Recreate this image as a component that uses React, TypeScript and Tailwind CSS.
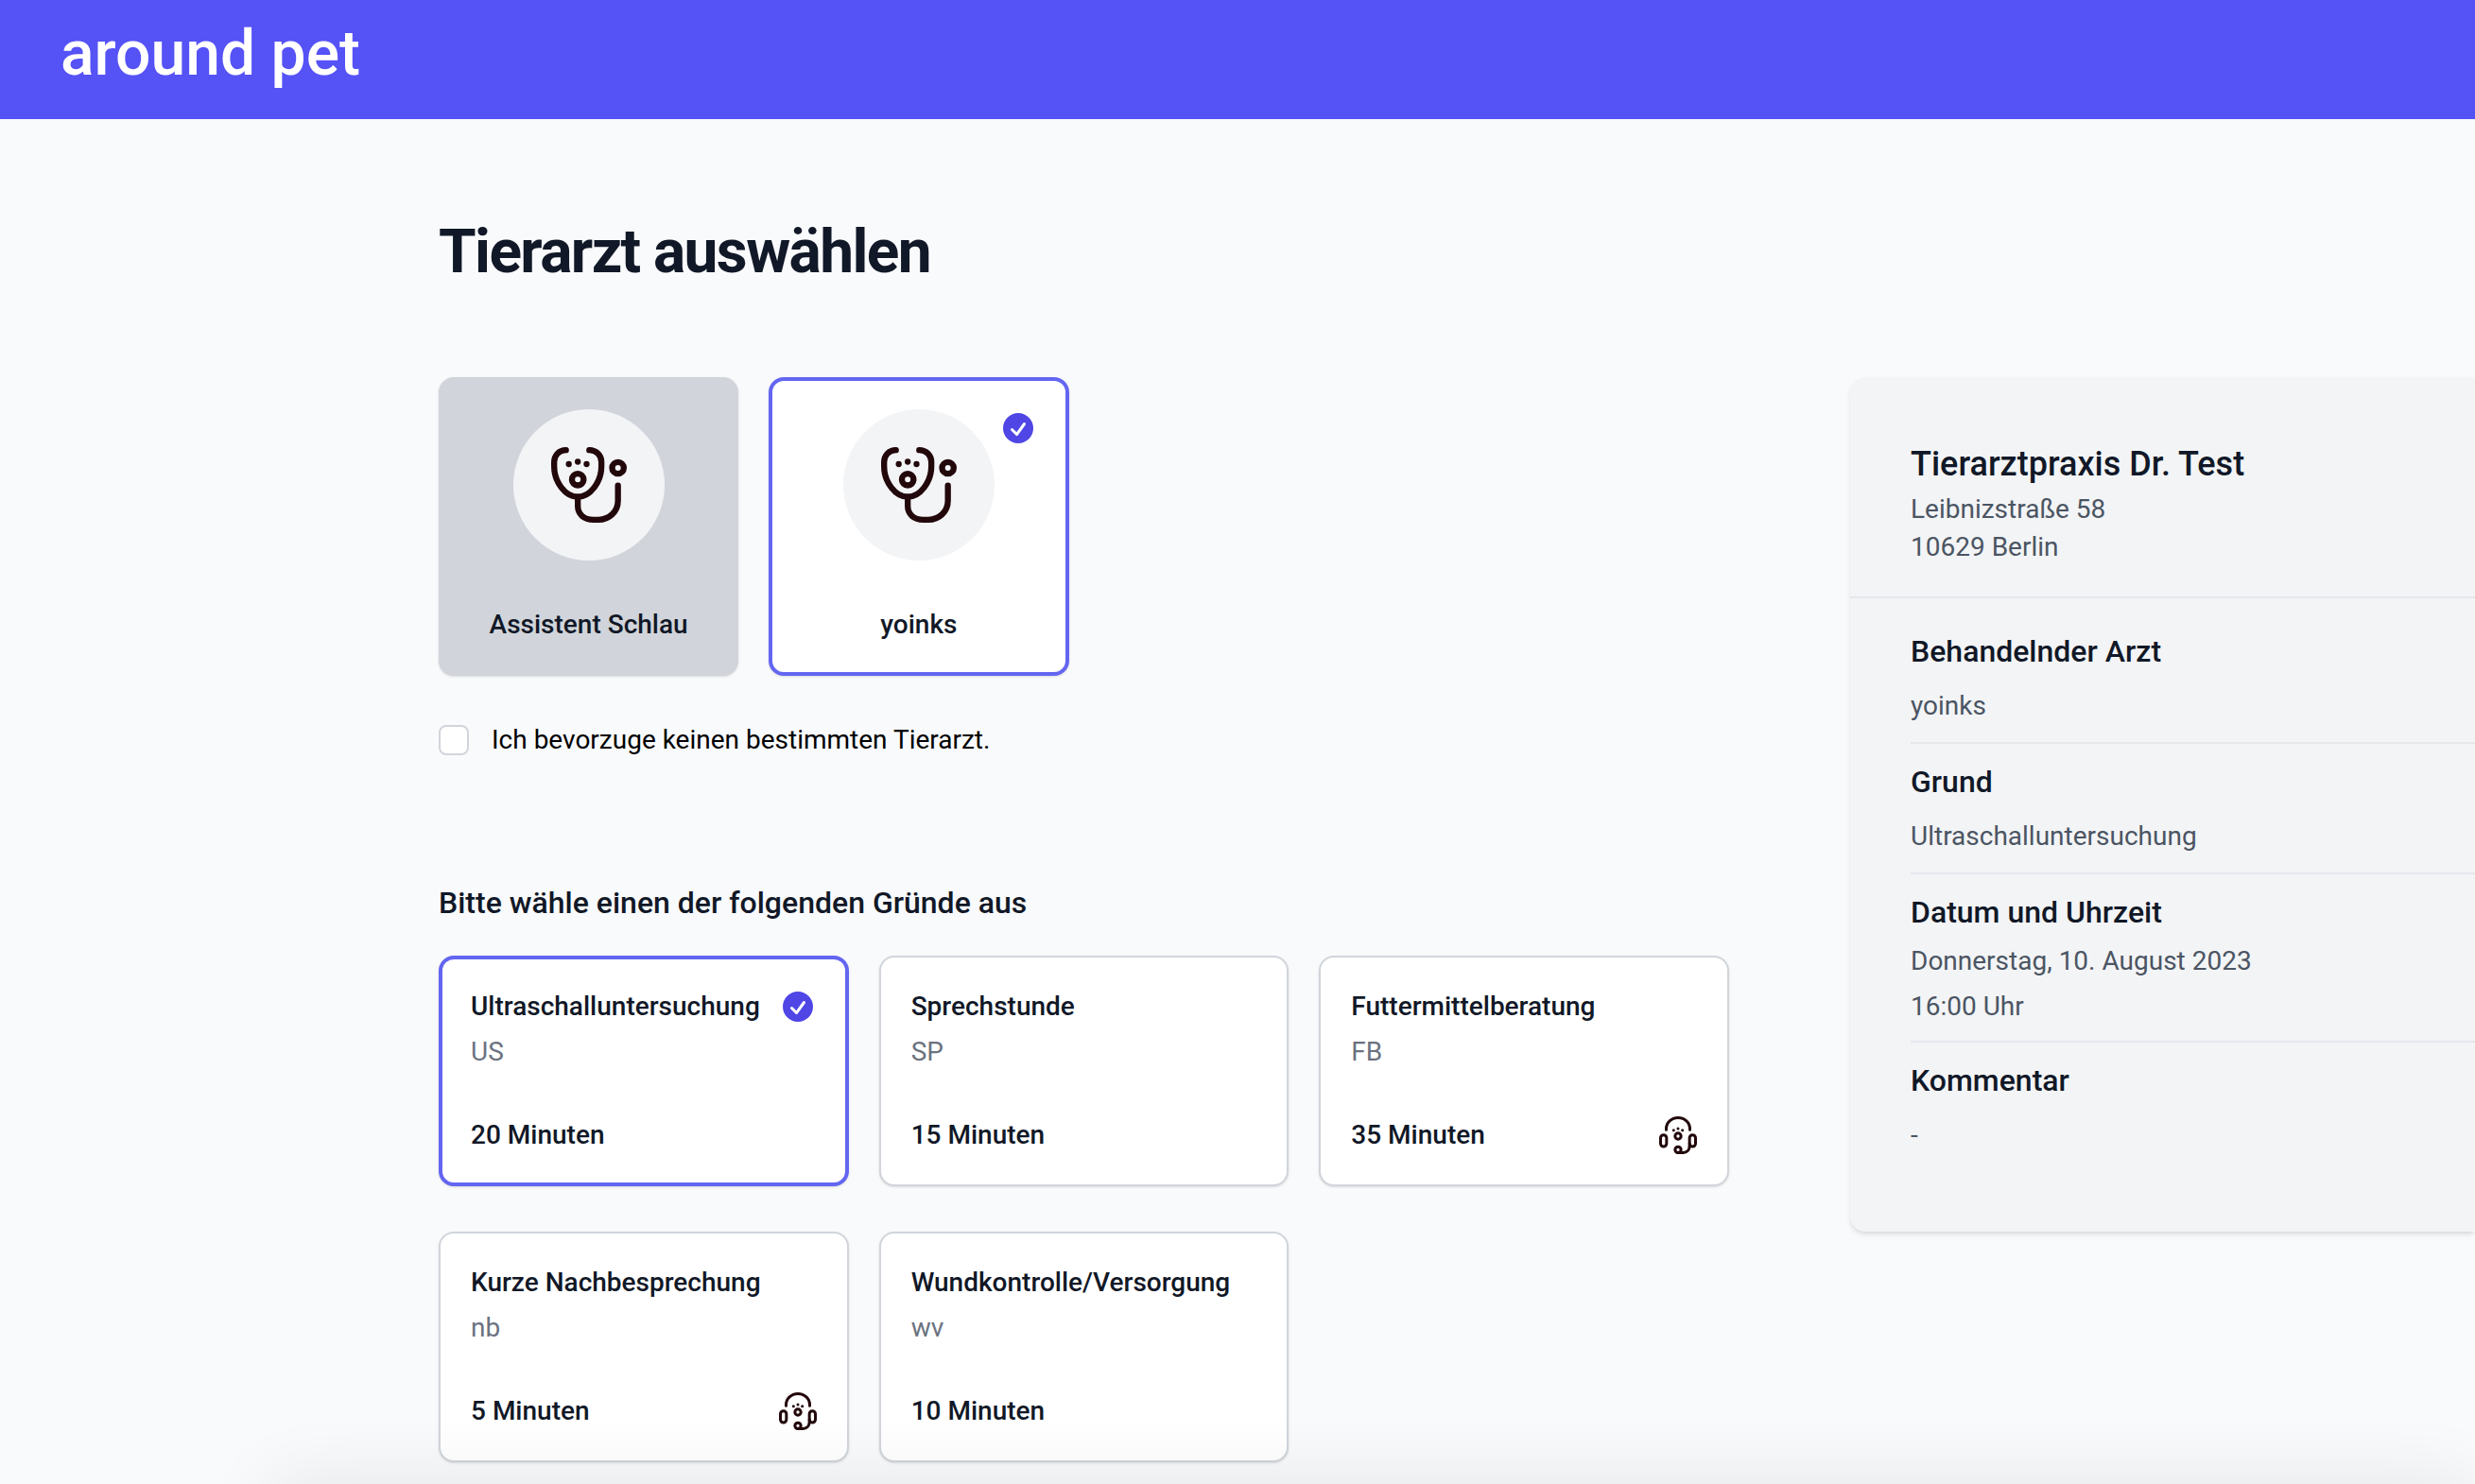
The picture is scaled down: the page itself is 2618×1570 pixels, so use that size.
import { useState } from "react";

const doctors = ["Assistent Schlau", "yoinks"];

type Reason = { name: string; code: string; minutes: number; remote?: boolean };

const reasons: Reason[] = [
  { name: "Ultraschalluntersuchung", code: "US", minutes: 20 },
  { name: "Sprechstunde", code: "SP", minutes: 15 },
  { name: "Futtermittelberatung", code: "FB", minutes: 35, remote: true },
  { name: "Kurze Nachbesprechung", code: "nb", minutes: 5, remote: true },
  { name: "Wundkontrolle/Versorgung", code: "wv", minutes: 10 },
];

function StethoscopeIcon() {
  return (
    <svg viewBox="0 0 240 240" className="size-20" fill="none" stroke="#22070b" strokeWidth="19" strokeLinecap="round" aria-hidden="true">
      <path d="M47 9.5C25 9.5 9.5 26 9.5 48V60C9.5 112 46 158 84.5 158C123 158 159.5 112 159.5 60V48C159.5 26 143 9.5 121 9.5" />
      <path d="M84.5 158V187C84.5 213 104 230.5 134 230.5H150C184 230.5 212 205 212 170V122" />
      <circle cx="84.5" cy="103" r="18.5" />
      <circle cx="212" cy="66" r="18.5" />
      <g fill="#22070b" stroke="none">
        <circle cx="56" cy="54" r="9.5" />
        <circle cx="84.5" cy="46.5" r="9.5" />
        <circle cx="112.5" cy="54" r="9.5" />
      </g>
    </svg>
  );
}

function HeadsetIcon() {
  return (
    <svg viewBox="0 0 120 120" className="size-10" fill="none" stroke="#22070b" strokeWidth="9" strokeLinecap="round" aria-hidden="true">
      <path d="M22.5 43V40C22.5 20 39 4.5 60 4.5S97.5 20 97.5 40V43" />
      <rect x="4.5" y="59" width="19" height="37" rx="9.5" />
      <rect x="96.5" y="59" width="19" height="37" rx="9.5" />
      <circle cx="60" cy="63" r="9.5" />
      <circle cx="60" cy="106" r="9.5" />
      <path d="M60 115.5H76C88 115.5 96.5 107 96.5 94V86" />
      <g fill="#22070b" stroke="none">
        <circle cx="46" cy="44" r="4.5" />
        <circle cx="60" cy="39" r="4.5" />
        <circle cx="74" cy="44" r="4.5" />
      </g>
    </svg>
  );
}

function CheckIcon() {
  return (
    <svg viewBox="0 0 20 20" className="size-10 shrink-0 text-[#4f46e5]" fill="currentColor" aria-hidden="true">
      <path
        fillRule="evenodd"
        clipRule="evenodd"
        d="M10 18a8 8 0 100-16 8 8 0 000 16zm3.857-9.809a.75.75 0 00-1.214-.882l-3.483 4.79-1.88-1.88a.75.75 0 10-1.06 1.061l2.5 2.5a.75.75 0 001.137-.089l4-5.5z"
      />
    </svg>
  );
}

function DetailRow({ term, children }: { term: string; children: string }) {
  return (
    <div className="border-b-2 border-[#e5e7eb] pt-4 pb-3.5 last:border-b-0">
      <dt className="text-[32px] leading-[48px] font-medium text-[#111827]">{term}</dt>
      <dd className="mt-2.5">{children}</dd>
    </div>
  );
}

export default function App() {
  const [doctor, setDoctor] = useState("yoinks");
  const [reason, setReason] = useState("Ultraschalluntersuchung");

  return (
    <div className="min-h-screen overflow-x-hidden bg-[#f9fafc] font-['Roboto',sans-serif] text-[28px] leading-10 text-[#111827]">
      <header className="flex h-[126px] items-center bg-[#5552f6] px-16 pb-3">
        <a href="#" className="text-[66px] leading-[80px] font-medium text-white">
          around pet
        </a>
      </header>

      <main className="pt-[101px] pb-5 pl-[464px]">
        <h1 className="mb-[92px] text-[64px] leading-[80px] font-bold tracking-tight">Tierarzt auswählen</h1>

        <div className="grid grid-cols-[minmax(0,1365fr)_minmax(0,661fr)] items-start gap-x-32">
          <div>
            <div className="grid grid-cols-4 gap-8">
              {doctors.map((name) => (
                <button
                  key={name}
                  type="button"
                  aria-pressed={doctor === name}
                  onClick={() => setDoctor(name)}
                  className={
                    doctor === name
                      ? "relative flex flex-col items-center gap-12 rounded-2xl border-4 border-[#6366f1] bg-white p-[30px] shadow-sm"
                      : "relative flex flex-col items-center gap-12 rounded-2xl border-2 border-[#d1d5db] bg-[#d1d5db] p-8 shadow-sm"
                  }
                >
                  <span className="flex size-40 items-center justify-center rounded-full bg-[#f3f4f6]">
                    <StethoscopeIcon />
                  </span>
                  <span className="font-medium">{name}</span>
                  {doctor === name && (
                    <span className="absolute top-[30px] right-[30px]">
                      <CheckIcon />
                    </span>
                  )}
                </button>
              ))}
            </div>

            <label className="mt-12 flex items-center gap-6 text-black">
              <input type="checkbox" className="size-8 appearance-none rounded-lg border-2 border-[#d1d5db] bg-white checked:bg-[#4f46e5]" />
              Ich bevorzuge keinen bestimmten Tierarzt.
            </label>

            <h2 className="mt-32 text-[32px] leading-[48px] font-medium">Bitte wähle einen der folgenden Gründe aus</h2>

            <div className="mt-8 grid grid-cols-3 gap-x-8 gap-y-12">
              {reasons.map((r) => (
                <button
                  key={r.name}
                  type="button"
                  aria-pressed={reason === r.name}
                  onClick={() => setReason(r.name)}
                  className={
                    reason === r.name
                      ? "flex flex-col rounded-2xl border-4 border-[#6366f1] bg-white p-[30px] text-left shadow-sm"
                      : "flex flex-col rounded-2xl border-2 border-[#d1d5db] bg-white p-8 text-left shadow-sm"
                  }
                >
                  <span className="flex w-full items-center justify-between">
                    <span className="font-medium">{r.name}</span>
                    {reason === r.name && <CheckIcon />}
                  </span>
                  <span className="mt-2 text-[#6b7280]">{r.code}</span>
                  <span className="mt-12 flex w-full items-center justify-between">
                    <span className="font-medium">{r.minutes} Minuten</span>
                    {r.remote && <HeadsetIcon />}
                  </span>
                </button>
              ))}
            </div>
          </div>

          <aside className="rounded-l-2xl bg-[#f3f4f6] shadow-md">
            <div className="border-b-2 border-[#e5e7eb] px-16 pt-16 pb-8">
              <h2 className="text-[36px] leading-[56px] font-medium">Tierarztpraxis Dr. Test</h2>
              <address className="text-[#4b5563] not-italic">
                Leibnizstraße 58
                <br />
                10629 Berlin
              </address>
            </div>
            <dl className="pt-4 pb-16 pl-16 leading-[48px] text-[#4b5563]">
              <DetailRow term="Behandelnder Arzt">{doctor}</DetailRow>
              <DetailRow term="Grund">{reason}</DetailRow>
              <div className="border-b-2 border-[#e5e7eb] pt-4 pb-3">
                <dt className="text-[32px] leading-[48px] font-medium text-[#111827]">Datum und Uhrzeit</dt>
                <dd className="mt-1">Donnerstag, 10. August 2023</dd>
                <dd>16:00 Uhr</dd>
              </div>
              <DetailRow term="Kommentar">-</DetailRow>
            </dl>
          </aside>
        </div>
      </main>

      {/* Soft shadow rising from below the bottom edge of the window */}
      <div className="pointer-events-none fixed right-0 -bottom-20 left-72 h-20 shadow-[0_0_80px_rgba(0,0,0,0.09)]" />
    </div>
  );
}
